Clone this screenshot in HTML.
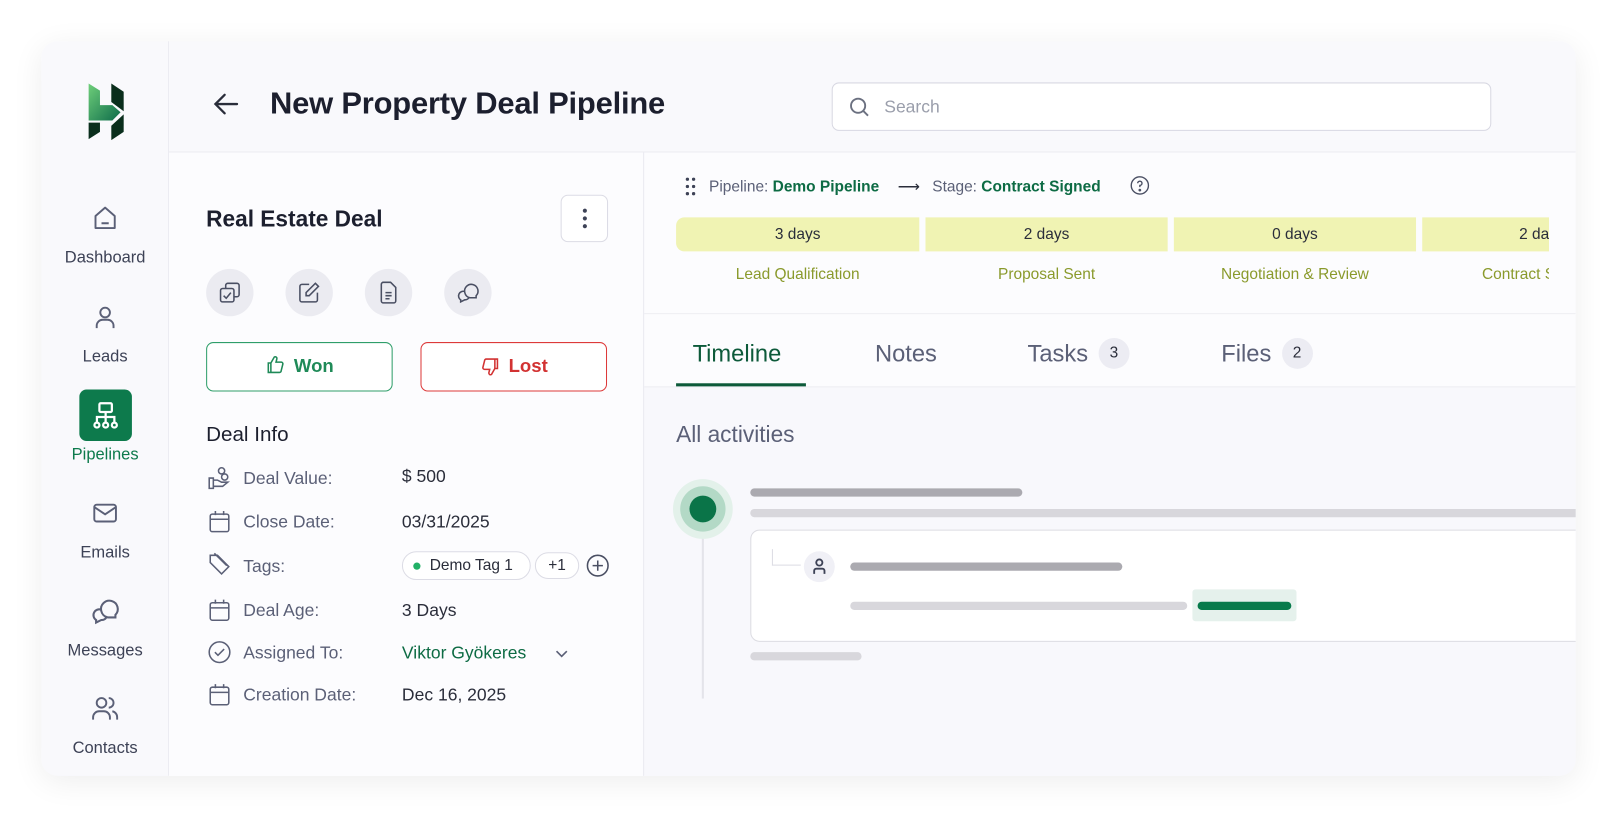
<!DOCTYPE html>
<html><head><meta charset="utf-8"><style>
*{box-sizing:border-box;margin:0;padding:0}
html,body{width:1616px;height:816px;overflow:hidden;background:#fff;font-family:"Liberation Sans",Arial,sans-serif}
#root{position:absolute;left:0;top:0;width:1568px;height:792px;transform:scale(1.0306,1.0303);transform-origin:0 0}
.a{position:absolute}
.card{left:40px;top:40px;width:1489px;height:713px;background:#f9f9fc;border-radius:16px;box-shadow:0 6px 30px rgba(0,0,0,.07);overflow:hidden}
.nav{position:absolute;left:0;width:124px;text-align:center;font-size:16px;color:#3d4256}
.nav svg{display:block;margin:0 auto}
.lbl{color:#5b6077;font-size:17px}
.val{color:#2a2d3a;font-size:17px}
.bar{position:absolute;border-radius:4px}
.circ{position:absolute;width:46px;height:46px;border-radius:50%;background:#ebebf1;display:flex;align-items:center;justify-content:center}
.seg{position:absolute;top:63px;height:33px;background:#f0f3b3;font-size:15px;color:#2a2d3a;text-align:center;line-height:33px}
.sl{position:absolute;top:110px;font-size:15px;color:#8a9a2c;text-align:center}
.tab{position:absolute;top:180px;height:30px;line-height:30px;font-size:23px;color:#5b6077;display:flex;align-items:center;white-space:nowrap}
.badge{display:inline-block;width:30px;height:30px;border-radius:50%;background:#ececf3;font-size:15px;color:#2a2d3a;text-align:center;line-height:30px;margin-left:10px}
</style></head><body><div id="root">
<div class="a card">
 <div class="a" style="left:0;top:0;width:124px;height:713px;border-right:1px solid #ececf2">
  <svg class="a" style="left:45px;top:40px" width="38" height="56" viewBox="0 0 38 56"><defs><linearGradient id="g" x1="0" y1="0" x2="1" y2="1"><stop offset="0" stop-color="#6fcf7a"/><stop offset="1" stop-color="#0d6b4a"/></linearGradient></defs><path d="M1 1 L12 8 V22 H24 L32 29 L24 37 H1 Z" fill="url(#g)"/><path d="M23 1 L35 9 V28 L23 19 Z" fill="#0a2e1c"/><path d="M1 39 H12 V48 L1 55 Z" fill="#0a2e1c"/><path d="M35 31 V48 L23 56 V42 Z" fill="#0a2e1c"/></svg>
  <div class="nav" style="top:158px"><svg width="28" height="28" viewBox="0 0 24 24" fill="none" stroke="#5b6077" stroke-width="1.6"><path d="M4 10 L12 3 L20 10 V20 H4 Z" stroke-linejoin="round"/><path d="M9 16 H15"/></svg><div style="margin-top:16px">Dashboard</div></div>
  <div class="nav" style="top:254px"><svg width="28" height="28" viewBox="0 0 24 24" fill="none" stroke="#5b6077" stroke-width="1.6"><circle cx="12" cy="8" r="4"/><path d="M5 21 V19 A5 5 0 0 1 10 14 H14 A5 5 0 0 1 19 19 V21"/></svg><div style="margin-top:16px">Leads</div></div>
  <div class="a" style="left:37px;top:338px;width:51px;height:50px;background:#0d7a4c;border-radius:7px"><svg style="margin:11px 0 0 11px" width="29" height="29" viewBox="0 0 24 24" fill="none" stroke="#fff" stroke-width="1.8"><rect x="7" y="2" width="10" height="7" rx="1"/><path d="M12 9 V13 M5 17 V13 H19 V17 M12 13 V17"/><circle cx="5" cy="19.5" r="2"/><circle cx="12" cy="19.5" r="2"/><circle cx="19" cy="19.5" r="2"/></svg></div>
  <div class="nav" style="top:393px;color:#0d7a4c">Pipelines</div>
  <div class="nav" style="top:444px"><svg width="28" height="28" viewBox="0 0 24 24" fill="none" stroke="#5b6077" stroke-width="1.6"><rect x="3" y="5" width="18" height="14" rx="2"/><path d="M3 7 L12 13 L21 7"/></svg><div style="margin-top:16px">Emails</div></div>
  <div class="nav" style="top:538px"><svg width="30" height="30" viewBox="0 0 24 24" fill="none" stroke="#5b6077" stroke-width="1.6"><path d="M9 12 A6.5 6.5 0 1 1 20 15 V17 H14 A6.5 6.5 0 0 1 9 12 Z"/><path d="M9 11 A4.5 4.5 0 0 0 5 19 V21 L9 19 A4.5 4.5 0 0 0 13 17"/></svg><div style="margin-top:15px">Messages</div></div>
  <div class="nav" style="top:634px"><svg width="28" height="28" viewBox="0 0 24 24" fill="none" stroke="#5b6077" stroke-width="1.6"><circle cx="9" cy="7" r="4"/><path d="M2 21 V19 A5 5 0 0 1 7 14 H11 A5 5 0 0 1 16 19 V21 M15 3 A4 4 0 0 1 15 11 M18 14 A5 5 0 0 1 22 19 V21"/></svg><div style="margin-top:16px">Contacts</div></div>
 </div>
 <div class="a" style="left:124px;top:0;width:1365px;height:108px;border-bottom:1px solid #ececf2">
  <svg class="a" style="left:42px;top:49px" width="28" height="24" viewBox="0 0 28 24" fill="none" stroke="#2a2d3a" stroke-width="2.2" stroke-linecap="round"><path d="M24 12 H4 M12 3 L3 12 L12 21"/></svg>
  <div class="a" style="left:98px;top:44px;font-size:30px;font-weight:bold;color:#1c1f2e;letter-spacing:-.2px">New Property Deal Pipeline</div>
  <div class="a" style="left:643px;top:40px;width:640px;height:47px;border:1.5px solid #d8d8e2;border-radius:7px;background:#fff">
   <svg class="a" style="left:15px;top:12px" width="22" height="22" viewBox="0 0 24 24" fill="none" stroke="#6b7080" stroke-width="2"><circle cx="10.5" cy="10.5" r="7.5"/><path d="M16 16 L21 21"/></svg>
   <div class="a" style="left:50px;top:13px;font-size:17px;color:#9a9eab">Search</div>
  </div>
 </div>
 <div class="a" style="left:124px;top:108px;width:461px;height:605px;background:#fcfcfe;border-right:1px solid #ececf2">
  <div class="a" style="left:36px;top:52px;font-size:22px;font-weight:bold;color:#1c1f2e">Real Estate Deal</div>
  <div class="a" style="left:380px;top:41px;width:46px;height:46px;border:1.5px solid #dcdce5;border-radius:7px;background:#fff"><svg style="margin:12px 0 0 20px" width="5" height="20"><circle cx="2.5" cy="2.5" r="2" fill="#3d4256"/><circle cx="2.5" cy="10" r="2" fill="#3d4256"/><circle cx="2.5" cy="17.5" r="2" fill="#3d4256"/></svg></div>
  <div class="circ" style="left:36px;top:113px"><svg width="24" height="24" viewBox="0 0 24 24" fill="none" stroke="#4a4f63" stroke-width="1.5"><rect x="8" y="3" width="13" height="13" rx="2"/><rect x="3" y="8" width="13" height="13" rx="2" fill="#ebebf1"/><path d="M6 15 L8.5 17.5 L13 12"/></svg></div>
  <div class="circ" style="left:113px;top:113px"><svg width="24" height="24" viewBox="0 0 24 24" fill="none" stroke="#4a4f63" stroke-width="1.5"><path d="M12 4 H5 A2 2 0 0 0 3 6 V19 A2 2 0 0 0 5 21 H18 A2 2 0 0 0 20 19 V12"/><path d="M18 3 L21 6 L12 15 H9 V12 Z"/></svg></div>
  <div class="circ" style="left:190px;top:113px"><svg width="24" height="24" viewBox="0 0 24 24" fill="none" stroke="#4a4f63" stroke-width="1.5"><path d="M6 2 H14 L19 7 V20 A2 2 0 0 1 17 22 H7 A2 2 0 0 1 5 20 V4 A2 2 0 0 1 7 2 Z"/><path d="M9 12 H15 M9 15 H15 M9 18 H13"/></svg></div>
  <div class="circ" style="left:267px;top:113px"><svg width="24" height="24" viewBox="0 0 24 24" fill="none" stroke="#4a4f63" stroke-width="1.5"><path d="M9 12 A6.5 6.5 0 1 1 20 15 V17 H14 A6.5 6.5 0 0 1 9 12 Z"/><path d="M9 11 A4.5 4.5 0 0 0 5 19 V21 L9 19 A4.5 4.5 0 0 0 13 17"/></svg></div>
  <div class="a" style="left:36px;top:184px;width:181px;height:48px;border:1.5px solid #2f9e6a;border-radius:7px;background:#fff;color:#1f8a58;font-size:18px;font-weight:bold;text-align:center;line-height:45px"><svg style="vertical-align:-3px;margin-right:8px" width="20" height="20" viewBox="0 0 24 24" fill="none" stroke="#1f8a58" stroke-width="1.8"><path d="M7 10 V21 H4 V10 Z M7 10 L11 3 A2 2 0 0 1 14 5 L13 9 H19 A2 2 0 0 1 21 11 L19 19 A2 2 0 0 1 17 21 H7"/></svg>Won</div>
  <div class="a" style="left:244px;top:184px;width:181px;height:48px;border:1.5px solid #dd3a3a;border-radius:7px;background:#fff;color:#d23232;font-size:18px;font-weight:bold;text-align:center;line-height:45px"><svg style="vertical-align:-5px;margin-right:8px" width="20" height="20" viewBox="0 0 24 24" fill="none" stroke="#d23232" stroke-width="1.8"><path d="M17 14 V3 H20 V14 Z M17 14 L13 21 A2 2 0 0 1 10 19 L11 15 H5 A2 2 0 0 1 3 13 L5 5 A2 2 0 0 1 7 3 H17"/></svg>Lost</div>
  <div class="a" style="left:36px;top:263px;font-size:20px;color:#1c1f2e">Deal Info</div>
  <svg class="a" style="left:37px;top:304px" width="24" height="24" viewBox="0 0 24 24" fill="none" stroke="#5b6077" stroke-width="1.5"><circle cx="14" cy="5" r="3"/><circle cx="17" cy="11" r="3"/><path d="M2 12 H6 V22 H2 Z M6 14 H10 L14 16 H20 L15 20 H6"/></svg>
  <svg class="a" style="left:37px;top:346px" width="24" height="24" viewBox="0 0 24 24" fill="none" stroke="#5b6077" stroke-width="1.5"><rect x="3" y="5" width="18" height="17" rx="2"/><path d="M3 10 H21 M8 2 V6 M16 2 V6"/></svg>
  <svg class="a" style="left:37px;top:388px" width="24" height="24" viewBox="0 0 24 24" fill="none" stroke="#5b6077" stroke-width="1.5"><path d="M3 3 H10 L21 14 L14 21 L3 10 Z"/><path d="M7 1 L19 13"/></svg>
  <svg class="a" style="left:37px;top:432px" width="24" height="24" viewBox="0 0 24 24" fill="none" stroke="#5b6077" stroke-width="1.5"><rect x="3" y="5" width="18" height="17" rx="2"/><path d="M3 10 H21 M8 2 V6 M16 2 V6"/></svg>
  <svg class="a" style="left:37px;top:473px" width="24" height="24" viewBox="0 0 24 24" fill="none" stroke="#5b6077" stroke-width="1.5"><circle cx="12" cy="12" r="10"/><path d="M7.5 12 L10.5 15 L16.5 9"/></svg>
  <svg class="a" style="left:37px;top:514px" width="24" height="24" viewBox="0 0 24 24" fill="none" stroke="#5b6077" stroke-width="1.5"><rect x="3" y="5" width="18" height="17" rx="2"/><path d="M3 10 H21 M8 2 V6 M16 2 V6"/></svg>
  <div class="a lbl" style="left:72px;top:307px">Deal Value:</div><div class="a val" style="left:226px;top:305px">$ 500</div>
  <div class="a lbl" style="left:72px;top:349px">Close Date:</div><div class="a val" style="left:226px;top:349px">03/31/2025</div>
  <div class="a lbl" style="left:72px;top:392px">Tags:</div>
  <div class="a" style="left:226px;top:387px;height:28px;width:125px;border:1.5px solid #dcdce5;border-radius:14px;background:#fff;font-size:15px;color:#2a2d3a;line-height:25px;padding-left:26px"><span class="a" style="left:10px;top:10px;width:7px;height:7px;border-radius:50%;background:#22b066"></span>Demo Tag 1</div>
  <div class="a" style="left:355px;top:388px;height:26px;width:43px;border:1.5px solid #dcdce5;border-radius:13px;background:#fff;font-size:15px;color:#2a2d3a;line-height:23px;text-align:center">+1</div>
  <svg class="a" style="left:404px;top:389px" width="24" height="24" viewBox="0 0 24 24" fill="none" stroke="#4a4f63" stroke-width="1.5"><circle cx="12" cy="12" r="10"/><path d="M12 7 V17 M7 12 H17"/></svg>
  <div class="a lbl" style="left:72px;top:435px">Deal Age:</div><div class="a val" style="left:226px;top:435px">3 Days</div>
  <div class="a lbl" style="left:72px;top:476px">Assigned To:</div><div class="a val" style="left:226px;top:476px;color:#0d6b44">Viktor Gyökeres</div>
  <svg class="a" style="left:374px;top:479px" width="14" height="14" viewBox="0 0 14 14" fill="none" stroke="#5b6077" stroke-width="1.6"><path d="M2 5 L7 10 L12 5"/></svg>
  <div class="a lbl" style="left:72px;top:517px">Creation Date:</div><div class="a val" style="left:226px;top:517px">Dec 16, 2025</div>
  <div class="a" style="left:21px;top:614px;width:420px;height:1px;background:#e6e6ee"></div>
  <div class="a" style="left:21px;top:635px;width:420px;height:40px;border:1.5px solid #e6e6ee;border-radius:10px;background:#fff"></div>
 </div>
 <div class="a" style="left:585px;top:108px;width:904px;height:605px;background:#f8f8fc;overflow:hidden">
  <div class="a" style="left:0;top:0;width:904px;height:157px;background:#fcfcfe;border-bottom:1px solid #ececf2"></div>
  <svg class="a" style="left:40px;top:24px" width="10" height="18"><g fill="#3d4256"><circle cx="2" cy="2" r="1.6"/><circle cx="8" cy="2" r="1.6"/><circle cx="2" cy="9" r="1.6"/><circle cx="8" cy="9" r="1.6"/><circle cx="2" cy="16" r="1.6"/><circle cx="8" cy="16" r="1.6"/></g></svg>
  <div class="a" style="left:63px;top:24px;font-size:15px;color:#5b6077;white-space:nowrap">Pipeline: <b style="color:#0d6b44">Demo Pipeline</b><span style="margin:0 12px 0 18px;color:#2a2d3a">⟶</span>Stage: <b style="color:#0d6b44">Contract Signed</b></div>
  <svg class="a" style="left:471px;top:22px" width="20" height="20" viewBox="0 0 24 24" fill="none" stroke="#4a4f63" stroke-width="1.6"><circle cx="12" cy="12" r="10"/><path d="M9.5 9.5 A2.5 2.5 0 1 1 12 12 V14"/><circle cx="12" cy="17.5" r=".8" fill="#4a4f63"/></svg>
  <div class="seg" style="left:31px;width:236px;border-radius:8px 0 0 8px">3 days</div>
  <div class="seg" style="left:273px;width:235px">2 days</div>
  <div class="seg" style="left:514px;width:235px">0 days</div>
  <div class="seg" style="left:755px;width:123px;text-align:left;padding-left:94px;overflow:hidden;white-space:nowrap">2 days</div>
  <div class="sl" style="left:31px;width:236px">Lead Qualification</div>
  <div class="sl" style="left:273px;width:235px">Proposal Sent</div>
  <div class="sl" style="left:514px;width:235px">Negotiation &amp; Review</div>
  <div class="sl" style="left:813px;white-space:nowrap;width:65px;overflow:hidden;text-align:left">Contract Signed</div>
  <div class="a" style="left:0;top:157px;width:904px;height:71px;background:#fcfcfe;border-bottom:1px solid #ececf2"></div>
  <div class="tab" style="left:47px;color:#0d5a3a">Timeline</div>
  <div class="a" style="left:31px;top:224px;width:126px;height:3px;background:#0d5a3a"></div>
  <div class="tab" style="left:224px">Notes</div>
  <div class="tab" style="left:372px">Tasks<span class="badge">3</span></div>
  <div class="tab" style="left:560px">Files<span class="badge">2</span></div>
  <div class="a" style="left:31px;top:261px;font-size:22px;color:#5b6077">All activities</div>
  <div class="a" style="left:56px;top:370px;width:2px;height:160px;background:#e4e4ea"></div>
  <div class="a" style="left:28px;top:317px;width:58px;height:58px;border-radius:50%;background:#e3f1ea"></div>
  <div class="a" style="left:35px;top:324px;width:44px;height:44px;border-radius:50%;background:#b3d9c6"></div>
  <div class="a" style="left:44px;top:333px;width:26px;height:26px;border-radius:50%;background:#0a7448"></div>
  <div class="bar" style="left:103px;top:326px;width:264px;height:8px;background:#abaab0"></div>
  <div class="bar" style="left:103px;top:346px;width:820px;height:8px;background:#d8d7dc"></div>
  <div class="a" style="left:103px;top:366px;width:820px;height:109px;border:1.5px solid #dcdce2;border-radius:9px;background:#fff">
   <div class="a" style="left:20px;top:18px;width:28px;height:16px;border-left:1.5px solid #dcdce4;border-bottom:1.5px solid #dcdce4"></div>
   <div class="a" style="left:51px;top:20px;width:30px;height:30px;border-radius:50%;background:#f0f0f6"><svg style="margin:7px 0 0 8px" width="14" height="16" viewBox="0 0 14 16" fill="none" stroke="#3d4256" stroke-width="1.8"><circle cx="7" cy="4" r="3"/><path d="M2 15 V12 A2 2 0 0 1 4 10 H10 A2 2 0 0 1 12 12 V15"/></svg></div>
   <div class="bar" style="left:96px;top:31px;width:264px;height:8px;background:#abaab0"></div>
   <div class="bar" style="left:96px;top:69px;width:327px;height:8px;background:#d8d7dc"></div>
   <div class="a" style="left:428px;top:57px;width:101px;height:31px;border-radius:3px;background:#e5f1ec"></div>
   <div class="bar" style="left:433px;top:69px;width:91px;height:8px;background:#077a4b"></div>
  </div>
  <div class="bar" style="left:103px;top:485px;width:108px;height:8px;background:#d8d7dc"></div>
 </div>
 <div class="a" style="left:584px;top:108px;width:1px;height:605px;background:#ececf2"></div>
</div>
</div></body></html>
